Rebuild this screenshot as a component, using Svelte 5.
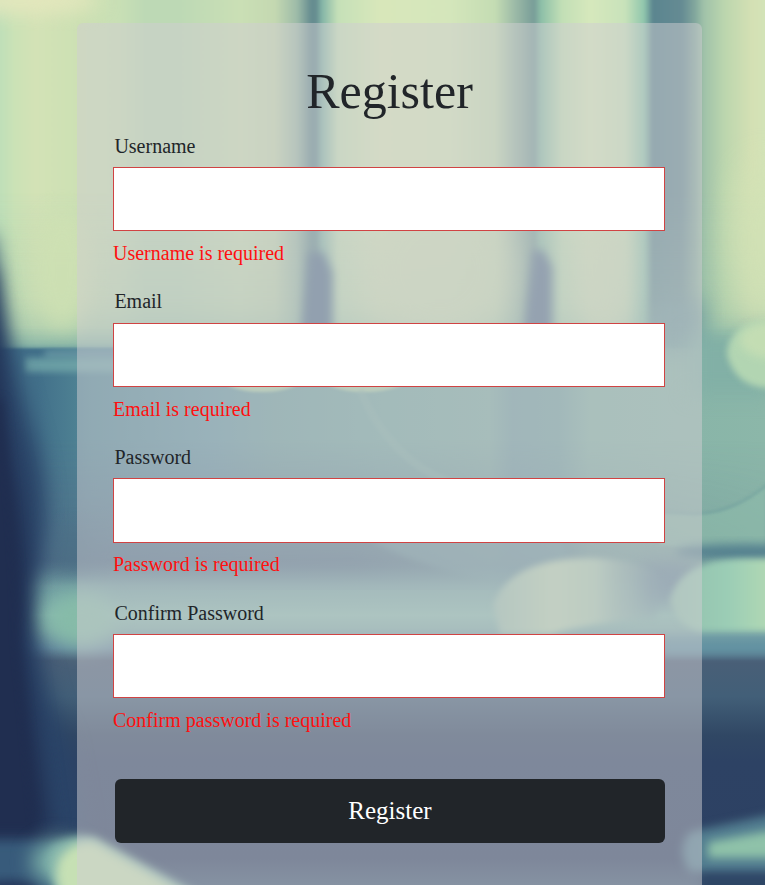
<script>
  const fields = [
    { id: 'username', label: 'Username', type: 'text', error: 'Username is required' },
    { id: 'email', label: 'Email', type: 'email', error: 'Email is required' },
    { id: 'password', label: 'Password', type: 'password', error: 'Password is required' },
    { id: 'confirm', label: 'Confirm Password', type: 'password', error: 'Confirm password is required' }
  ];

  // Vertical light bands in the upper part of the backdrop: [x, colour]
  const bands = [
    [0, '#bfdfb8'], [15, '#cbe2b6'], [35, '#d3e2b6'], [80, '#cce0b3'], [120, '#c8dfb5'],
    [145, '#bdd9b5'], [180, '#bdd9b5'], [240, '#cadfb5'], [275, '#c4d8b1'], [297, '#9dbba8'],
    [311, '#668d90'], [316, '#668d90'], [322, '#84b5a7'], [338, '#c5e0b8'], [380, '#d8e7ba'],
    [450, '#d4e6bb'], [495, '#c4dcb3'], [515, '#9cbaa7'], [534, '#789d98'], [541, '#8dbfa8'],
    [562, '#c2dfb6'], [590, '#d6e8bc'], [625, '#c8e2ba'], [644, '#90c6ad'], [653, '#5b858f'],
    [682, '#658b93'], [695, '#82a79d'], [704, '#a0c2a9'], [725, '#bcd6ae'], [752, '#d4e0b4'], [765, '#d3e3b7']
  ];
</script>

<div class="page">
  <svg class="backdrop" viewBox="0 0 765 885" preserveAspectRatio="none" aria-hidden="true" color-interpolation-filters="sRGB">
    <defs>
      <linearGradient id="bands" gradientUnits="userSpaceOnUse" x1="0" y1="0" x2="765" y2="0">
        {#each bands as [x, color]}
          <stop offset={x / 765} stop-color={color} />
        {/each}
      </linearGradient>
      <linearGradient id="mid" gradientUnits="userSpaceOnUse" x1="0" y1="0" x2="765" y2="0">
        <stop offset="0.05" stop-color="#42708a" />
        <stop offset="0.12" stop-color="#528796" />
        <stop offset="0.28" stop-color="#6497a3" />
        <stop offset="0.36" stop-color="#6e9f9f" />
        <stop offset="0.5" stop-color="#76a8a3" />
        <stop offset="0.64" stop-color="#7eaca4" />
        <stop offset="0.67" stop-color="#729fa3" />
        <stop offset="0.73" stop-color="#74a3a3" />
        <stop offset="0.77" stop-color="#84b2a7" />
        <stop offset="1" stop-color="#8cb7a9" />
      </linearGradient>
      <linearGradient id="midShade" x1="0" y1="0" x2="0" y2="1">
        <stop offset="0" stop-color="#53708a" stop-opacity="0" />
        <stop offset="0.85" stop-color="#4f6a84" />
        <stop offset="1" stop-color="#5a7c90" />
      </linearGradient>
      <linearGradient id="midFade" gradientUnits="userSpaceOnUse" x1="80" y1="0" x2="765" y2="0">
        <stop offset="0" stop-color="#fff" stop-opacity="0.85" />
        <stop offset="0.4" stop-color="#fff" stop-opacity="0.8" />
        <stop offset="0.7" stop-color="#fff" stop-opacity="0.35" />
        <stop offset="1" stop-color="#fff" stop-opacity="0.15" />
      </linearGradient>
      <mask id="fadeRight"><rect width="765" height="885" fill="url(#midFade)" /></mask>
      <linearGradient id="low" gradientUnits="userSpaceOnUse" x1="0" y1="560" x2="0" y2="885">
        <stop offset="0" stop-color="#66919b" stop-opacity="0" />
        <stop offset="0.08" stop-color="#7aa8a7" stop-opacity="0.8" />
        <stop offset="0.17" stop-color="#8abbb0" />
        <stop offset="0.21" stop-color="#81afaa" />
        <stop offset="0.27" stop-color="#668ca0" />
        <stop offset="0.31" stop-color="#495f77" />
        <stop offset="0.42" stop-color="#425f78" />
        <stop offset="0.54" stop-color="#304764" />
        <stop offset="0.62" stop-color="#2d4264" />
        <stop offset="0.92" stop-color="#2d4163" />
        <stop offset="1" stop-color="#3b5673" />
      </linearGradient>
      <linearGradient id="coolDown" x1="0" y1="0" x2="0" y2="1">
        <stop offset="0" stop-color="#93bfa9" stop-opacity="0" />
        <stop offset="0.7" stop-color="#93bfa9" stop-opacity="0.25" />
        <stop offset="0.86" stop-color="#8dbba8" stop-opacity="0.45" />
        <stop offset="1" stop-color="#7cada4" stop-opacity="0.9" />
      </linearGradient>
      <linearGradient id="disc" x1="0" y1="0" x2="1" y2="0">
        <stop offset="0" stop-color="#9abfb0" />
        <stop offset="0.35" stop-color="#b6d2b4" />
        <stop offset="0.6" stop-color="#a9cab3" />
        <stop offset="1" stop-color="#6d919f" stop-opacity="0.3" />
      </linearGradient>
      <linearGradient id="discRight" x1="0" y1="0" x2="1" y2="0">
        <stop offset="0" stop-color="#92bfae" />
        <stop offset="0.5" stop-color="#9bcdb5" />
        <stop offset="1" stop-color="#b9dcb4" />
      </linearGradient>
      <filter id="b1" x="-20%" y="-20%" width="140%" height="140%"><feGaussianBlur stdDeviation="1.5" /></filter>
      <filter id="b3" x="-30%" y="-30%" width="160%" height="160%"><feGaussianBlur stdDeviation="3" /></filter>
      <filter id="b5" x="-50%" y="-50%" width="200%" height="200%"><feGaussianBlur stdDeviation="5" /></filter>
      <filter id="b10" x="-60%" y="-60%" width="220%" height="220%"><feGaussianBlur stdDeviation="10" /></filter>
      <filter id="b16" x="-80%" y="-80%" width="260%" height="260%"><feGaussianBlur stdDeviation="16" /></filter>
    </defs>

    <rect width="765" height="885" fill="url(#mid)" />
    <rect x="0" y="440" width="765" height="150" fill="url(#midShade)" mask="url(#fadeRight)" />

    <!-- window light -->
    <rect x="-10" y="-10" width="785" height="356" fill="url(#bands)" filter="url(#b1)" />
    <rect x="-10" y="190" width="785" height="158" fill="url(#coolDown)" filter="url(#b1)" />
    <ellipse cx="20" cy="0" rx="80" ry="14" fill="#e4e7bd" filter="url(#b10)" />
    <ellipse cx="62" cy="270" rx="30" ry="60" fill="#cfe1b3" opacity="0.8" filter="url(#b10)" />
    <ellipse cx="440" cy="270" rx="75" ry="75" fill="#cadcb6" opacity="0.7" filter="url(#b16)" />
    <ellipse cx="605" cy="270" rx="25" ry="75" fill="#cadcb6" opacity="0.7" filter="url(#b10)" />
    <ellipse cx="765" cy="240" rx="35" ry="80" fill="#d2e2b5" opacity="0.8" filter="url(#b16)" />
    <path d="M309 252 H323 L332 272 V350 H300 Z" fill="#54728c" filter="url(#b5)" />
    <path d="M533 250 H543 L552 267 V350 H522 Z" fill="#5a768f" filter="url(#b5)" />
    <rect x="655" y="300" width="50" height="50" fill="#6f9aa0" opacity="0.7" filter="url(#b10)" />
    <rect x="690" y="335" width="85" height="60" fill="#82b0a6" filter="url(#b10)" />

    <!-- ledge under the window -->
    <rect x="45" y="350" width="200" height="8" fill="#6291a0" filter="url(#b3)" />
    <rect x="25" y="358" width="220" height="14" fill="#72a7a9" opacity="0.8" filter="url(#b3)" />
    <ellipse cx="262" cy="375" rx="44" ry="17" fill="#a9cda9" filter="url(#b1)" />
    <ellipse cx="365" cy="375" rx="46" ry="17" fill="#a9cda9" filter="url(#b1)" />

    <!-- chair curves -->
    <path d="M765 484 Q735 514 695 514 L660 511 V545 L765 555 Z" fill="#8ebcab" opacity="0.6" filter="url(#b1)" />
    <path d="M770 482 Q735 513 695 514 L660 512" fill="none" stroke="#709e9d" stroke-width="3" opacity="0.6" filter="url(#b1)" />
    <path d="M360 390 Q390 460 450 482" fill="none" stroke="#86b2a9" stroke-width="8" opacity="0.4" filter="url(#b1)" />
    <path d="M370 540 Q430 572 500 582 L570 560 L560 535 Z" fill="#729da3" opacity="0.6" filter="url(#b3)" />
    <ellipse cx="745" cy="552" rx="70" ry="8" fill="#55818f" filter="url(#b5)" />

    <!-- lower shelf -->
    <rect y="560" width="765" height="325" fill="url(#low)" />
    <rect x="640" y="562" width="55" height="42" fill="#638099" opacity="0.65" filter="url(#b10)" />
    <path d="M493 605 Q510 558 590 558 Q655 560 665 584 L655 618 Q590 622 550 634 H500 Z" fill="url(#disc)" filter="url(#b3)" />
    <path d="M670 600 Q680 559 745 559 H785 V631 H700 Q675 625 670 600 Z" fill="url(#discRight)" filter="url(#b3)" />
    <path d="M785 322 H755 Q727 330 727 355 Q736 388 770 388 H785 Z" fill="#b2d5b2" filter="url(#b3)" />
    <ellipse cx="770" cy="340" rx="30" ry="18" fill="#c8dfb4" opacity="0.8" filter="url(#b5)" />
    <rect x="660" y="640" width="125" height="15" fill="#6295a3" opacity="0.75" filter="url(#b5)" />

    <!-- dark upright on the left -->
    <path d="M-60 235 L-8 235 Q8 350 32 430 Q58 510 34 590 Q38 680 68 740 L85 832 H-60 Z" fill="#2a4468" filter="url(#b10)" />
    <path d="M-60 270 L-7 270 Q0 420 18 490 Q34 580 24 640 L50 832 H-60 Z" fill="#202e50" filter="url(#b10)" />
    <path d="M-60 400 L2 400 Q18 560 18 640 L36 832 H-60 Z" fill="#202e50" filter="url(#b5)" />
    <ellipse cx="75" cy="550" rx="18" ry="25" fill="#4a6f84" opacity="0.5" filter="url(#b10)" />
    <ellipse cx="82" cy="620" rx="32" ry="27" fill="#86bba8" filter="url(#b10)" />

    <!-- bright streaks at the foot -->
    <path d="M-30 842 H60 L80 920 H-30 Z" fill="#385b7b" filter="url(#b5)" />
    <ellipse cx="10" cy="888" rx="30" ry="8" fill="#26395c" filter="url(#b5)" />
    <ellipse cx="60" cy="862" rx="28" ry="22" fill="#7fb3aa" filter="url(#b10)" />
    <path d="M52 848 Q70 832 95 837 L200 895 V920 H75 Q42 880 52 848 Z" fill="#8ab9ad" filter="url(#b5)" />
    <path d="M60 858 Q74 840 94 842 L190 897 V925 H80 Q48 885 60 858 Z" fill="#c6e0b4" filter="url(#b5)" />
    <path d="M690 832 L785 812 V872 H690 Q675 850 690 832 Z" fill="#527d90" filter="url(#b5)" />
    <path d="M708 842 L785 828 V858 H708 Z" fill="#8fc2a9" filter="url(#b5)" />
    <rect x="700" y="875" width="85" height="20" fill="#2d4565" filter="url(#b5)" />
  </svg>

  <form class="card" novalidate onsubmit={(e) => e.preventDefault()}>
    <h1>Register</h1>
    {#each fields as f}
      <div class="field">
        <label for={f.id}>{f.label}</label>
        <input id={f.id} type={f.type} />
        <p class="error">{f.error}</p>
      </div>
    {/each}
    <button type="submit">Register</button>
  </form>
</div>

<style>
  :global(body) {
    margin: 0;
  }
  .page {
    position: relative;
    box-sizing: border-box;
    height: 885px;
    padding: 23px 63px 0 77px;
    overflow: hidden;
    font-family: 'Liberation Serif', 'Times New Roman', serif;
    color: #212529;
  }
  .backdrop {
    position: absolute;
    inset: 0;
    width: 100%;
    height: 100%;
  }
  .card {
    position: relative;
    box-sizing: border-box;
    display: flex;
    flex-direction: column;
    height: 900px;
    padding: 38px 37px 0 36px;
    border-radius: 6px;
    background: rgba(207, 205, 210, 0.5);
  }
  h1 {
    margin: 0 0 9.7px;
    padding-left: 1px;
    font-size: 50px;
    line-height: 60px;
    font-weight: 400;
    text-align: center;
  }
  .field {
    flex: none;
    display: flex;
    flex-direction: column;
    height: 155.7px;
    font-size: 20px;
    line-height: 30px;
  }
  label {
    margin: 0 0 6.3px 1.4px;
  }
  input {
    box-sizing: border-box;
    width: 100%;
    height: 64.45px;
    margin: 0;
    padding: 0 16px;
    border: 1px solid #d04343;
    border-radius: 0;
    background: #fff;
    font: inherit;
    outline: none;
  }
  .error {
    margin: 6.5px 0 0;
    color: #ff1010;
  }
  button {
    flex: none;
    height: 64px;
    margin: 25.5px 0 0 2px;
    padding: 0;
    border: 0;
    border-radius: 6px;
    background: #212529;
    color: #fff;
    font-family: inherit;
    font-size: 25px;
  }
</style>
